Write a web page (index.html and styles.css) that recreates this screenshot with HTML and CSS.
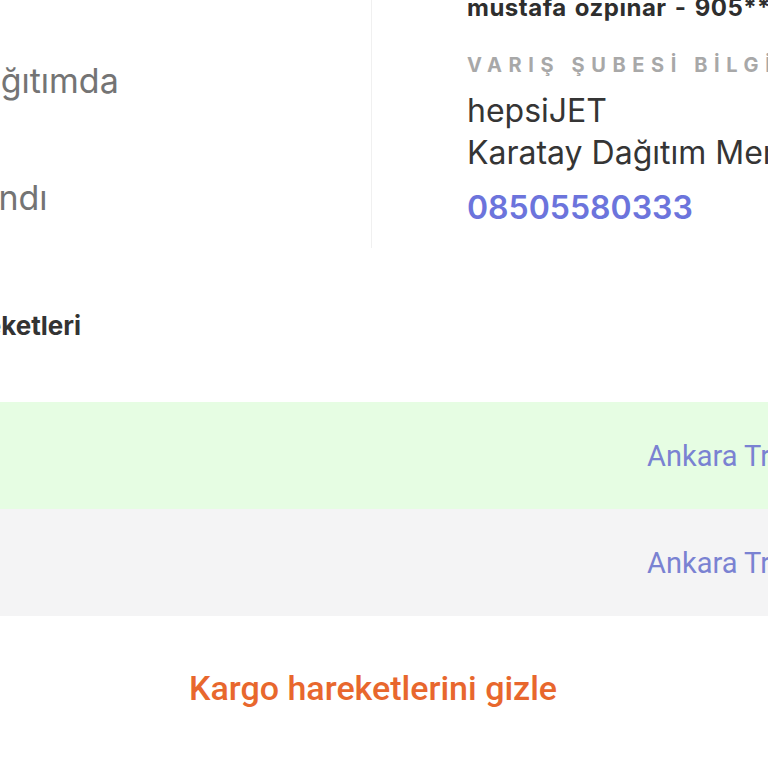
FILE: index.html
```html
<!DOCTYPE html>
<html lang="tr">
<head>
<meta charset="utf-8">
<title>Kargo Takip</title>
<link rel="stylesheet" href="styles.css">
</head>
<body>
<div class="page">
  <section class="info">
    <div class="status-col">
      <ul class="status-list">
        <li class="status status-first">Dağıtımda</li>
        <li class="status status-second">Teslim alındı</li>
      </ul>
    </div>
    <div class="branch-col">
      <div class="recipient">mustafa ozpınar - 905*** ** 12</div>
      <div class="label">VARIŞ ŞUBESİ BİLGİLERİ</div>
      <div class="branch-line">hepsiJET</div>
      <div class="branch-line">Karatay Dağıtım Merkezi</div>
      <a class="phone" href="#">08505580333</a>
    </div>
  </section>

  <h2 class="moves-title">Kargo Hareketleri</h2>

  <div class="moves">
    <div class="move move-current"><span class="move-place">Ankara Transfer Merkezi</span></div>
    <div class="move"><span class="move-place">Ankara Transfer Merkezi</span></div>
  </div>

  <div class="footer">
    <button class="toggle" type="button">Kargo hareketlerini gizle</button>
  </div>
</div>
</body>
</html>
```
FILE: styles.css
```css
html, body {
  margin: 0;
  padding: 0;
  background: #ffffff;
}
body {
  width: 768px;
  height: 768px;
  overflow: hidden;
  font-family: Inter, "Noto Sans", "DejaVu Sans", sans-serif;
  color: #333333;
}
.page {
  width: 768px;
}
.info {
  display: grid;
  grid-template-columns: 372px 1fr;
  height: 248px;
}
.status-col {
  overflow: hidden;
  border-right: 1px solid #f0f0f0;
}
.status-list {
  list-style: none;
  margin: 0;
  padding: 60px 0 0 0;
  display: flex;
  flex-direction: column;
  gap: 75px;
}
.status {
  font-size: 34px;
  line-height: 42px;
  color: #747474;
  white-space: nowrap;
}
.status-first {
  margin-left: -43px;
}
.status-second {
  margin-left: -150px;
}
.branch-col {
  padding-left: 95px;
  white-space: nowrap;
  display: flex;
  flex-direction: column;
  align-items: flex-start;
}
.recipient {
  font-size: 24px;
  line-height: 28px;
  font-weight: 700;
  letter-spacing: 0.5px;
  word-spacing: 2px;
  color: #2e2e2e;
  margin-top: -6px;
}
.label {
  font-size: 20px;
  line-height: 24px;
  font-weight: 700;
  letter-spacing: 6.6px;
  color: #a8a8a8;
  margin-top: 31px;
}
.branch-line {
  font-size: 32px;
  line-height: 42px;
  color: #353535;
}
.label + .branch-line {
  margin-top: 13px;
}
.phone {
  font-size: 32px;
  line-height: 42px;
  font-weight: 600;
  color: #6c74dc;
  text-decoration: none;
  margin-top: 13px;
}
.moves-title {
  margin: 62px 0 0 -141px;
  font-size: 26px;
  line-height: 32px;
  font-weight: 700;
  color: #333333;
  white-space: nowrap;
}
.moves {
  margin-top: 60px;
  display: flex;
  flex-direction: column;
}
.move {
  height: 107px;
  display: flex;
  align-items: center;
  padding-left: 647px;
  background: #f4f4f5;
  white-space: nowrap;
  overflow: hidden;
}
.move-current {
  background: #e6fde3;
}
.move-place {
  font-family: Roboto, Inter, sans-serif;
  font-size: 29px;
  color: #7a82d2;
}
.footer {
  display: flex;
  justify-content: center;
  padding-right: 22px;
  margin-top: 52px;
}
.toggle {
  border: 0;
  background: none;
  padding: 0;
  font-family: Roboto, Inter, sans-serif;
  font-size: 34px;
  line-height: 40px;
  font-weight: 500;
  color: #e8672d;
  cursor: pointer;
}
```
